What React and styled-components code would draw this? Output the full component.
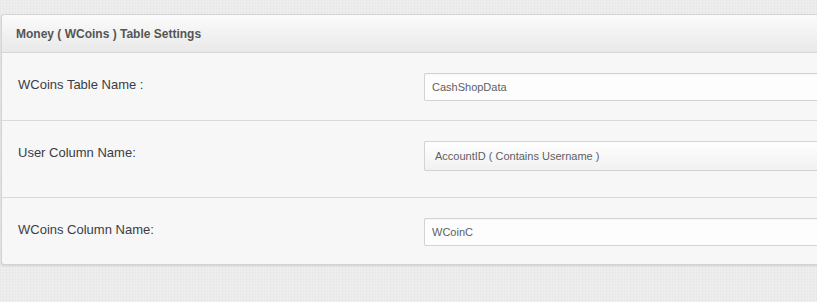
import styled, { createGlobalStyle } from 'styled-components';

const GlobalStyle = createGlobalStyle`
  html, body {
    margin: 0;
    padding: 0;
    overflow: hidden;
  }
  body {
    font-family: "Liberation Sans", Arial, sans-serif;
    background-color: #ececec;
    background-image:
      repeating-linear-gradient(0deg, rgba(255,255,255,0.18) 0 1px, transparent 1px 3px),
      repeating-linear-gradient(90deg, rgba(0,0,0,0.018) 0 1px, transparent 1px 3px);
  }
`;

const Page = styled.div`
  padding: 14px 0 0 1px;
  height: 302px;
  box-sizing: border-box;
`;

const Panel = styled.div`
  background: #f7f7f7;
  border: 1px solid #d4d4d4;
  border-right: none;
  border-radius: 3px 0 0 3px;
  box-shadow: 0 1px 2px rgba(0, 0, 0, 0.12);
`;

const Header = styled.div`
  height: 37px;
  padding: 0 14px;
  display: flex;
  align-items: center;
  background: linear-gradient(to bottom, #fbfbfb 0%, #e9e9e9 100%);
  border-bottom: 1px solid #d6d6d6;
  border-radius: 3px 0 0 0;
  font-size: 12px;
  font-weight: bold;
  color: #555;
`;

const Row = styled.div`
  display: grid;
  grid-template-columns: 407px 1fr;
  padding: 20px 0 ${p => p.$bottom}px 0;
  border-top: ${p => (p.$first ? 'none' : '1px solid #dadada')};
`;

const Label = styled.div`
  padding: 4px 0 0 16px;
  font-size: 13px;
  line-height: 16px;
  color: #3c3c46;
`;

const Field = styled.div`
  height: ${p => p.$h}px;
  box-sizing: border-box;
  border: 1px solid #d3d3d3;
  border-right: none;
  border-radius: 2px 0 0 2px;
  display: flex;
  align-items: center;
  font-size: 11px;
  color: #5f5f63;
  background: ${p =>
    p.$select ? 'linear-gradient(to bottom, #ffffff 0%, #f1f1f1 100%)' : '#fdfdfd'};
  box-shadow: ${p => (p.$select ? 'none' : 'inset 0 1px 1px rgba(0,0,0,0.03)')};
  padding: 0 0 0 ${p => (p.$select ? 10 : 7)}px;
  margin-left: 15px;
`;

const rows = [
  { label: 'WCoins Table Name :', value: 'CashShopData', h: 28, bottom: 19 },
  { label: 'User Column Name:', value: 'AccountID ( Contains Username )', h: 30, bottom: 26, select: true },
  { label: 'WCoins Column Name:', value: 'WCoinC', h: 28, bottom: 18 },
];

export default function App() {
  return (
    <>
      <GlobalStyle />
      <Page>
        <Panel>
          <Header>Money ( WCoins ) Table Settings</Header>
          {rows.map((r, i) => (
            <Row key={r.label} $first={i === 0} $bottom={r.bottom}>
              <Label>{r.label}</Label>
              <Field $h={r.h} $select={r.select}>{r.value}</Field>
            </Row>
          ))}
        </Panel>
      </Page>
    </>
  );
}
